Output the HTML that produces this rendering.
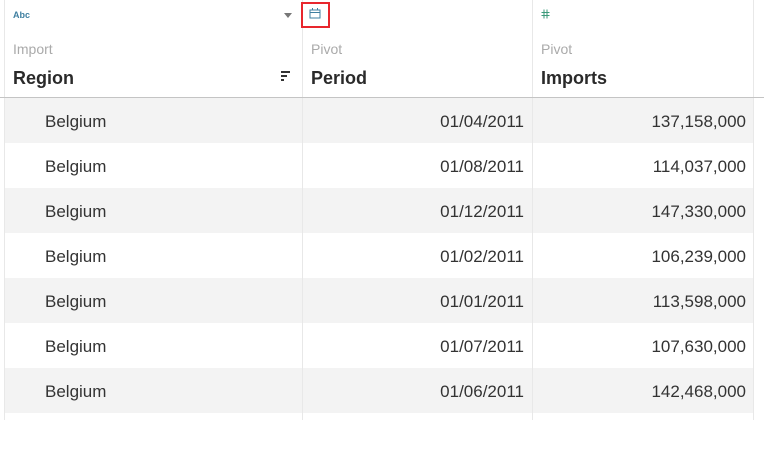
<!DOCTYPE html>
<html><head><style>
body{margin:0;width:764px;height:420px;overflow:hidden;background:#fff;font-family:"Liberation Sans",sans-serif;position:relative}
.v{position:absolute;top:0;height:420px;width:1px;background:#e8e8e8}
.row{position:absolute;left:5px;width:748px;height:45px;font-size:17px;color:#333}
.row span{position:absolute;top:14px}
.g{background:#f3f3f3}
.sub{position:absolute;top:41px;font-size:14px;color:#aaa}
.hd{position:absolute;top:68px;font-size:18px;font-weight:bold;color:#2a2a2a}
</style></head><body>
<div class="row g" style="top:98px"><span style="left:40px">Belgium</span><span style="right:229px">01/04/2011</span><span style="right:7px">137,158,000</span></div>
<div class="row" style="top:143px"><span style="left:40px">Belgium</span><span style="right:229px">01/08/2011</span><span style="right:7px">114,037,000</span></div>
<div class="row g" style="top:188px"><span style="left:40px">Belgium</span><span style="right:229px">01/12/2011</span><span style="right:7px">147,330,000</span></div>
<div class="row" style="top:233px"><span style="left:40px">Belgium</span><span style="right:229px">01/02/2011</span><span style="right:7px">106,239,000</span></div>
<div class="row g" style="top:278px"><span style="left:40px">Belgium</span><span style="right:229px">01/01/2011</span><span style="right:7px">113,598,000</span></div>
<div class="row" style="top:323px"><span style="left:40px">Belgium</span><span style="right:229px">01/07/2011</span><span style="right:7px">107,630,000</span></div>
<div class="row g" style="top:368px"><span style="left:40px">Belgium</span><span style="right:229px">01/06/2011</span><span style="right:7px">142,468,000</span></div>
<div class="row" style="top:413px"></div>
<div class="v" style="left:4px"></div><div class="v" style="left:302px"></div><div class="v" style="left:532px"></div><div class="v" style="left:753px"></div>
<div style="position:absolute;left:0;top:97px;width:764px;height:1px;background:#c4c4c4"></div>
<div style="position:absolute;left:13px;top:10px;font-size:9px;font-weight:bold;color:#3f7fa0">Abc</div>
<div style="position:absolute;left:284px;top:13px;width:0;height:0;border-left:4px solid transparent;border-right:4px solid transparent;border-top:5px solid #777"></div>
<div style="position:absolute;left:301px;top:2px;width:25px;height:22px;border:2px solid #e8262d"></div>
<svg style="position:absolute;left:309px;top:8px" width="12" height="11" viewBox="0 0 12 11"><rect x="1" y="2" width="10" height="8" fill="none" stroke="#3f7fa0"/><line x1="1" y1="4.5" x2="11" y2="4.5" stroke="#3f7fa0"/><line x1="3.5" y1="0" x2="3.5" y2="2" stroke="#3f7fa0"/><line x1="8.5" y1="0" x2="8.5" y2="2" stroke="#3f7fa0"/></svg>
<svg style="position:absolute;left:541px;top:9px" width="9" height="10" viewBox="0 0 9 10"><path d="M3 0.5V9.5M6 0.5V9.5M0.5 3.5H8.5M0.5 6.5H8.5" stroke="#3a9a7a" stroke-width="1"/></svg>
<div class="sub" style="left:13px">Import</div><div class="sub" style="left:311px">Pivot</div><div class="sub" style="left:541px">Pivot</div>
<div class="hd" style="left:13px">Region</div><div class="hd" style="left:311px">Period</div><div class="hd" style="left:541px">Imports</div>
<div style="position:absolute;left:281px;top:71px;width:9px;height:2px;background:#333"></div>
<div style="position:absolute;left:281px;top:75px;width:6px;height:2px;background:#333"></div>
<div style="position:absolute;left:281px;top:79px;width:3px;height:2px;background:#333"></div>
</body></html>
